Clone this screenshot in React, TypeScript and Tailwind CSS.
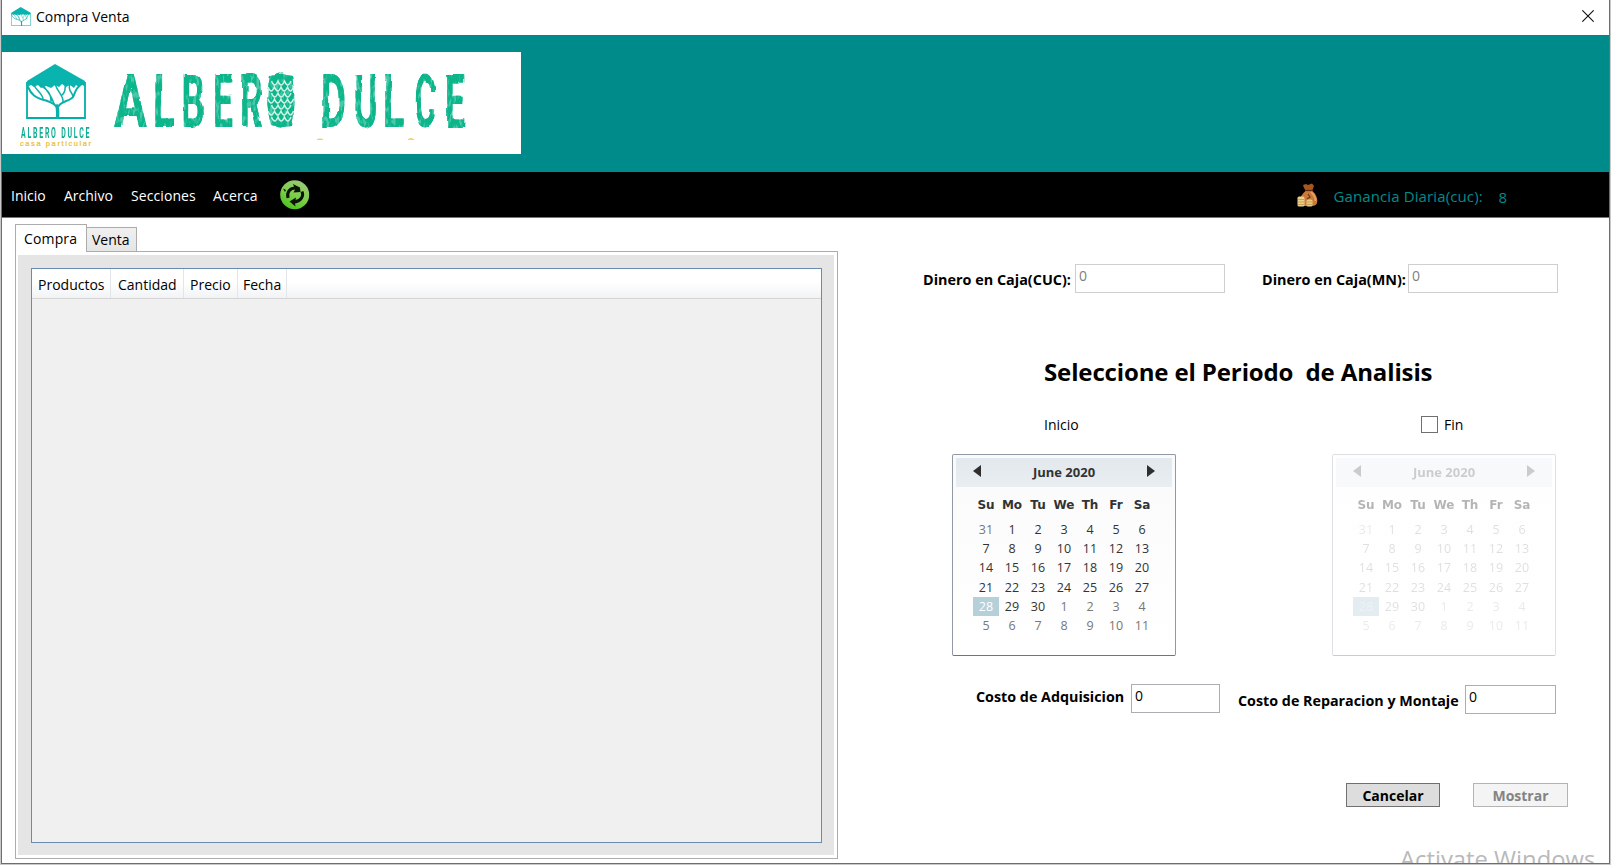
import React from "react";

const DAYS = ["Su", "Mo", "Tu", "We", "Th", "Fr", "Sa"];
const DATES = [
  31, 1, 2, 3, 4, 5, 6, 7, 8, 9, 10, 11, 12, 13, 14, 15, 16, 17, 18, 19, 20, 21,
  22, 23, 24, 25, 26, 27, 28, 29, 30, 1, 2, 3, 4, 5, 6, 7, 8, 9, 10, 11,
];
const SELECTED = 28;

function HouseTree({ className }: { className: string }) {
  return (
    <svg className={className} viewBox="0 0 60 55" preserveAspectRatio="none" fill="none">
      <path d="M1 18V54H59V18" stroke="#00b0a8" strokeWidth="1.8" />
      <path
        d="M29 0L59 17L58 22L55 20L53 23L50 21L48 24L44 21L40 23L36 20L33 23L29 21L25 24L20 22L15 24L12 21L8 23L5 21L1 23V17Z"
        fill="#0ab4ae"
      />
      <g stroke="#0ab0aa" strokeLinecap="round">
        <path d="M31.500 54C32 47 32 46 31 42" strokeWidth="3.4" />
        <path d="M31 43C26 37 25 39 20 36.500C9 34 5 30 2 23" strokeWidth="2" />
        <path d="M28 40C26 32 22 28 16 20M25 37C25 28 20 25 13 20M17 35C17 30 11 27 7 20" strokeWidth="1.500" />
        <path d="M32 43C35 36 46 38 48 31C50 26 50 24 57 19" strokeWidth="2" />
        <path d="M37 38C38 32 32 29 29 20M36 31C41 27 38 23 40 19M47 33C47 28 41 27 44 20" strokeWidth="1.500" />
      </g>
    </svg>
  );
}

const LETTERS: [string, number, number][] = [
  ["A", 114, 0.66],
  ["L", 153, 0.52],
  ["B", 181.5, 0.49],
  ["E", 213, 0.48],
  ["R", 240, 0.48],
  ["O", 266, 0.56],
  ["D", 321, 0.52],
  ["U", 353.5, 0.5],
  ["L", 383, 0.51],
  ["C", 414.5, 0.45],
  ["E", 445, 0.48],
];

function Banner() {
  return (
    <div className="flex h-[102px] w-[519px] bg-white">
      <div className="flex w-[100px] flex-col pl-6 pt-3">
        <HouseTree className="h-[55px] w-[60px]" />
        <svg className="-ml-[6px] mt-[5px] h-[28px] w-[76px]" viewBox="0 0 76 28">
          <g filter="url(#rough-sm)">
            <text transform="translate(1 13.5) scale(0.48 1)" fontFamily="Roboto, sans-serif" fontWeight="bold" fontSize="14.500" letterSpacing="3.7" fill="#10ae90">
              ALBERO DULCE
            </text>
          </g>
          <text x="0" y="22" textLength="71" lengthAdjust="spacing" fontFamily="Liberation Sans, sans-serif" fontSize="7.5" fill="#e9bd2c" stroke="#e9bd2c" strokeWidth="0.200">
            casa particular
          </text>
        </svg>
      </div>
      <svg className="h-[102px] w-[380px]" viewBox="102 52 380 102">
        <defs>
          <filter id="rough" x="-5%" y="-5%" width="110%" height="110%">
            <feTurbulence type="fractalNoise" baseFrequency="0.06" numOctaves="2" seed="4" result="n" />
            <feDisplacementMap in="SourceGraphic" in2="n" scale="3.2" xChannelSelector="R" yChannelSelector="G" result="d" />
            <feTurbulence type="fractalNoise" baseFrequency="0.3 0.12" numOctaves="2" seed="9" result="s" />
            <feColorMatrix in="s" type="matrix" values="0 0 0 0 0  0 0 0 0 0  0 0 0 0 0  -7 0 0 0 4.7" result="m" />
            <feComposite in="d" in2="m" operator="in" result="cut" />
            <feComponentTransfer in="d" result="soft">
              <feFuncA type="linear" slope="0.75" />
            </feComponentTransfer>
            <feMerge>
              <feMergeNode in="soft" />
              <feMergeNode in="cut" />
            </feMerge>
          </filter>
          <filter id="rough-sm">
            <feTurbulence type="fractalNoise" baseFrequency="0.4" numOctaves="1" seed="2" result="n" />
            <feDisplacementMap in="SourceGraphic" in2="n" scale="1.2" />
          </filter>
        </defs>
        <g filter="url(#rough)" fontFamily="Roboto, sans-serif" fontWeight="bold" fontSize="74" fill="#0cb58b">
          {LETTERS.map(([ch, x, s], i) => (
            <text key={i} transform={`translate(${x} 127) scale(${s} 1)`}>
              {ch}
            </text>
          ))}
          <path d="M270 76Q281 74 292 76Q297 101 292 126Q281 128 271 125Q264 101 270 76Z" />
        </g>
        <g stroke="#cdf3e6" strokeWidth="1.5" fill="none">
          {[81, 87, 93, 99, 105, 111, 117].map((y, i) => (
            <path
              key={y}
              d={
                i % 2
                  ? `M268 ${y}q3 8 6.500 0q3 8 6.500 0q3 8 6.500 0q3 8 6 0`
                  : `M271.500 ${y}q3 8 6.500 0q3 8 6.500 0q3 8 6.500 0`
              }
            />
          ))}
        </g>
        <path d="M317 139.500q3-1.400 6 0ZM408 139.500q3-2.200 6 0Z" fill="#f2c84b" stroke="#f2c84b" strokeWidth="0.600" />
      </svg>
    </div>
  );
}

function RefreshIcon() {
  return (
    <svg className="h-[30px] w-[30px]" viewBox="0 0 30 30">
      <defs>
        <linearGradient id="green" x1="0.2" y1="1" x2="0.7" y2="0">
          <stop offset="0" stopColor="#48c01b" />
          <stop offset="0.5" stopColor="#7fcf4c" />
          <stop offset="1" stopColor="#9cc877" />
        </linearGradient>
      </defs>
      <circle cx="14.700" cy="14.700" r="14.500" fill="url(#green)" />
      <g fill="none" stroke="#0a1506" strokeWidth="3">
        <path d="M8 18C6.500 12 10 8 15.500 8" />
        <path d="M22 11.500C24 16 21 21 14.500 22" />
      </g>
      <path d="M13 4L20 7.500L20.500 12L13.500 12.500L15 9.500ZM16 17.500L9.500 21.500L15.500 26.500L15 23Z" fill="#0a1506" />
      <path d="M3 8.500L6 10L5 12Z" fill="#0a1506" />
    </svg>
  );
}

function MoneyBag() {
  return (
    <svg className="h-[24px] w-[21px]" viewBox="0 0 21 24">
      <path d="M6 2L9 1L11 2L15 0.500L17 3L15 8H9L7 5Z" fill="#a5571f" />
      <path d="M9 7.500H15C19 11 21 16 20 20C19 23 16 23 12 23H6C1 21 2 13 9 7.500Z" fill="#c87838" />
      <path d="M14 9C17 12 19 15 18.500 18" stroke="#e3a062" strokeWidth="2" fill="none" />
      <path d="M8 7.500H16" stroke="#5c2a0c" strokeWidth="1.200" />
      <path d="M11 11L13 14L10 16" stroke="#6d3714" strokeWidth="1.200" fill="none" />
      <rect x="0.500" y="13.500" width="7" height="10" rx="1.500" fill="#ecd08a" />
      <rect x="9.500" y="16.500" width="6" height="7" rx="1.500" fill="#e8c97e" />
      <path d="M1 16.500H7M1 19H7M1 21.500H7M10 19H15M10 21.500H15" stroke="#b98d45" strokeWidth="0.700" />
    </svg>
  );
}

function Calendar({ disabled = false }: { disabled?: boolean }) {
  const dim = disabled ? "opacity-[0.22]" : "";
  const num = disabled ? "opacity-[0.15]" : "";
  return (
    <div
      className={
        "h-[202px] w-[224px] rounded-[2px] border bg-gradient-to-b p-[3px] text-[#333333] " +
        (disabled
          ? "border-[#dde1e6] border-b-[#c5ced6] from-[#fefefe] to-white"
          : "border-[#8f9aa6] border-b-[#5f7a90] from-[#fafafa] to-white")
      }
    >
      <div
        className={
          "flex h-[29px] items-start justify-between px-[17px] " +
          (disabled ? "bg-[#f7f9fa]" : "bg-gradient-to-b from-[#e3e8ed] to-[#e9eef3]")
        }
      >
        <svg className={"mt-[7px] h-3 w-2 " + dim} viewBox="0 0 8 12">
          <path d="M8 0V12L0 6Z" fill="#2e2e2e" />
        </svg>
        <span className={"mt-[4px] text-[13px] font-bold leading-5 " + dim}>June 2020</span>
        <svg className={"mt-[7px] h-3 w-2 " + dim} viewBox="0 0 8 12">
          <path d="M0 0V12L8 6Z" fill="#2e2e2e" />
        </svg>
      </div>
      <div className={"ml-[17px] mt-[8px] grid w-[182px] grid-cols-7 text-center font-['DejaVu_Sans'] text-[12px] font-bold leading-[20px] " + (disabled ? "opacity-[0.36]" : "")}>
        {DAYS.map((d) => (
          <span key={d}>{d}</span>
        ))}
      </div>
      <div className="ml-[17px] mt-[5px] grid w-[182px] auto-rows-[19.2px] grid-cols-7 text-center text-[12.5px] leading-[19px]">
        {DATES.map((d, i) => {
          const outside = i === 0 || i > 30;
          const selected = d === SELECTED;
          if (selected)
            return (
              <span key={i} className={disabled ? "bg-[#e3edf1] text-[#edf3f6]" : "bg-[#b6d0da] text-white"}>
                {d}
              </span>
            );
          return (
            <span key={i} className={(outside ? "text-[#777777] " : "") + num}>
              {d}
            </span>
          );
        })}
      </div>
    </div>
  );
}

function Field({ className }: { className: string }) {
  return (
    <div className={"h-[29px] border bg-white pl-[3px] text-[14px] leading-[21px] " + className}>0</div>
  );
}

const HEADERS: [string, string][] = [
  ["Productos", "w-[79px] pl-[6px]"],
  ["Cantidad", "w-[73px] pl-[7px]"],
  ["Precio", "w-[54px] pl-[6px]"],
  ["Fecha", "w-[49px] pl-[5px]"],
];

export default function App() {
  return (
    <div className="flex h-[865px] w-[1611px] flex-col overflow-hidden bg-[#c9c9c9] pl-px font-['Open_Sans',sans-serif] text-[14px] text-black">
      <div className="relative flex h-[864px] w-[1609px] flex-col overflow-hidden border-x border-b border-[#6e6e6e] bg-white">
        <div className="flex h-[35px] shrink-0 items-start">
          <HouseTree className="ml-[9px] mt-[7px] h-[19px] w-5" />
          <span className="ml-[5px] mt-[7px] leading-[20px]">Compra Venta</span>
          <svg className="ml-auto mr-[15px] mt-[10px] h-3 w-3" viewBox="0 0 12 12">
            <path d="M0.300 0.300L11.700 11.700M11.700 0.300L0.300 11.700" stroke="#111" strokeWidth="1.100" />
          </svg>
        </div>

        <div className="h-[137px] shrink-0 bg-[#008b8b] pt-[17px]">
          <Banner />
        </div>

        <div className="flex h-[46px] shrink-0 items-start border-b border-[#777] bg-black text-white">
          <div className="ml-[9px] flex pt-[14px] leading-[20px]">
            <span className="w-[53px]">Inicio</span>
            <span className="w-[67px]">Archivo</span>
            <span className="w-[82px] tracking-[0.08px]">Secciones</span>
            <span className="w-[67px] tracking-[0.2px]">Acerca</span>
          </div>
          <div className="pt-2">
            <RefreshIcon />
          </div>
          <div className="ml-auto mr-[102px] flex items-start text-[15px] leading-[20px] text-[#008b8b]">
            <div className="mt-[11px]">
              <MoneyBag />
            </div>
            <span className="ml-[15px] mt-[14px] w-[165px] whitespace-nowrap tracking-[0.12px]">Ganancia Diaria(cuc):</span>
            <span className="mt-[15px]">8</span>
          </div>
        </div>

        <div className="flex min-h-0 flex-1">
          <div className="flex w-[836px] shrink-0 flex-col pl-[13px] pt-[6px]">
            <div className="z-10 -mb-px flex h-[28px] items-end">
              <div className="h-[28px] w-[72px] border border-b-0 border-[#acacac] bg-white pl-[8px] pt-[4px] leading-[20px] tracking-[0.15px]">
                Compra
              </div>
              <div className="-ml-px mt-[3px] h-[25px] w-[51px] self-start border border-[#acacac] bg-gradient-to-b from-[#f0f0f0] to-[#e5e5e5] pl-[5px] pt-[2px] leading-[20px]">
                Venta
              </div>
            </div>
            <div className="h-[608px] w-[823px] border border-[#acacac] bg-white p-[3px] pl-[2px]">
              <div className="h-full bg-[#e5e5e5] pl-[13px] pr-[12px] pt-[13px]">
                <div className="h-[575px] border border-[#688caf] bg-[#f0f0f0]">
                  <div className="flex h-[30px] border-b border-[#d5d5d5] bg-gradient-to-b from-white from-45% to-[#f1f3f5] leading-[20px]">
                    {HEADERS.map(([label, cls]) => (
                      <div key={label} className={"border-r border-[#e2e5e9] pt-[6px] " + cls}>
                        {label}
                      </div>
                    ))}
                  </div>
                </div>
              </div>
            </div>
          </div>

          <div className="flex flex-1 flex-col">
            <div className="mt-[46px] flex pl-[85px] text-[14.4px] font-bold">
              <span className="w-[152px] whitespace-nowrap pt-[6px] leading-[20px]">Dinero en Caja(CUC):</span>
              <Field className="w-[150px] border-[#cfcfcf] font-normal text-[#808080]" />
              <span className="ml-[37px] w-[146px] whitespace-nowrap pt-[6px] leading-[20px]">Dinero en Caja(MN):</span>
              <Field className="w-[150px] border-[#cfcfcf] font-normal text-[#808080]" />
            </div>
            <h1 className="mt-[63px] whitespace-pre pl-[206px] text-[24px] font-bold leading-[32px] tracking-[-0.13px]">
              Seleccione el Periodo  de Analisis
            </h1>
            <div className="mt-[26px] flex pl-[206px] leading-[20px]">
              <span className="w-[377px] pt-px">Inicio</span>
              <span className="mt-[2px] h-[17px] w-[17px] border border-[#707070] bg-white" />
              <span className="ml-[6px] pt-px">Fin</span>
            </div>
            <div className="mt-[19px] flex gap-[156px] pl-[114px]">
              <Calendar />
              <Calendar disabled />
            </div>
            <div className="mt-[28px] flex items-start pl-[138px] text-[14.3px] font-bold">
              <span className="w-[155px] whitespace-nowrap pt-[3px] leading-[20px]">Costo de Adquisicion</span>
              <Field className="w-[89px] border-[#abadb3] font-normal" />
              <span className="ml-[18px] w-[227px] whitespace-nowrap pt-[7px] leading-[20px]">
                Costo de Reparacion y Montaje
              </span>
              <Field className="mt-px w-[91px] border-[#abadb3] font-normal" />
            </div>
            <div className="mt-[69px] flex pl-[508px] text-center font-bold leading-[23px]">
              <button className="h-[24px] w-[94px] border border-[#707070] bg-[#dddddd]">Cancelar</button>
              <button className="ml-[33px] h-[24px] w-[95px] border border-[#b4b4b4] bg-[#f4f4f4] text-[#838383]">
                Mostrar
              </button>
            </div>
          </div>
        </div>
        <span className="absolute left-[1398px] top-[842px] whitespace-nowrap text-[23.8px] leading-[34px] text-[#b9b9b9]">
          Activate Windows
        </span>
      </div>
    </div>
  );
}
